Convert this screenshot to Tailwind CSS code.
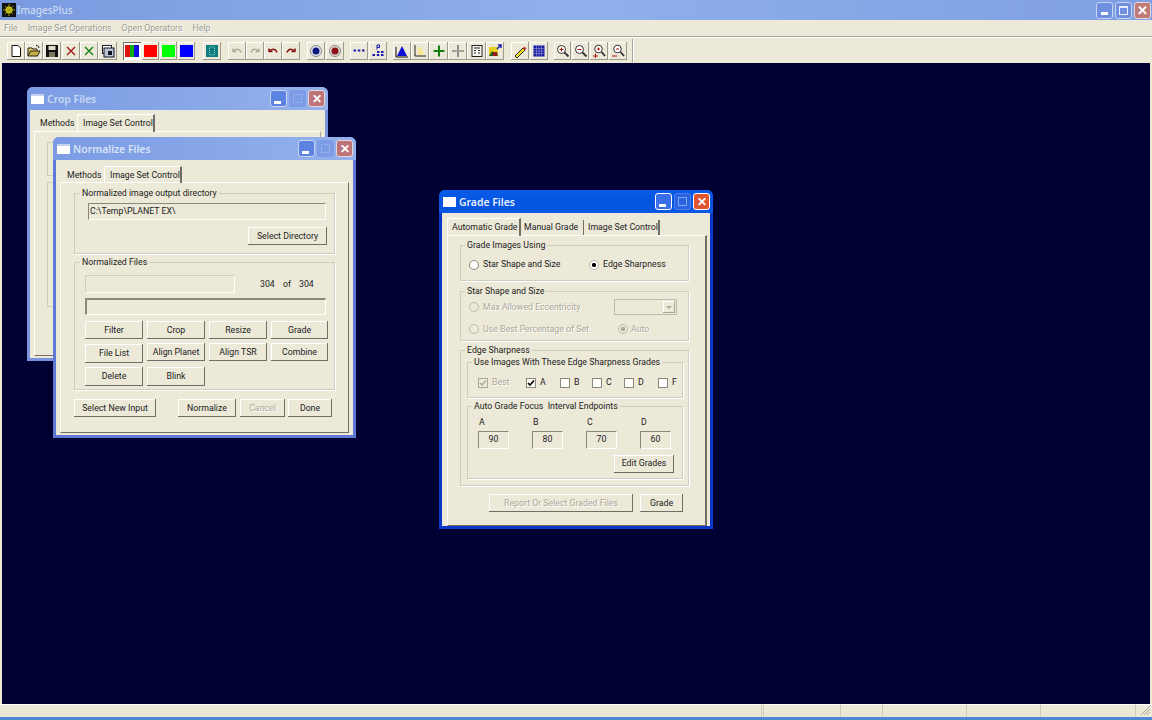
<!DOCTYPE html>
<html lang="en">
<head>
<meta charset="UTF-8">
<title>ImagesPlus</title>
<script src="https://cdn.jsdelivr.net/npm/@tailwindcss/browser@4"></script>
</head>
<body class="w-[1152px] h-[720px] overflow-hidden flex flex-col bg-[#ece9d8] text-[#222] font-['Roboto','Liberation_Sans',Arial,sans-serif] text-[8.75px] leading-none whitespace-nowrap">

<!-- main title bar -->
<header class="h-[20px] flex items-center bg-gradient-to-r from-[#7a9ae0] via-[#8fb0ea] to-[#7f9fe4]">
  <svg class="w-[14px] h-[14px] ml-[2px]" viewBox="0 0 14 14"><rect width="14" height="14" fill="#111"/><circle cx="7" cy="7" r="3.5" fill="#d8d010"/><path d="M7 1v12M1 7h12M3 3l8 8M11 3l-8 8" stroke="#a8a010" stroke-width="1"/></svg>
  <span class="ml-[1px] font-['Noto_Sans',sans-serif] text-[10.2px] text-[#d5e1f7]">ImagesPlus</span>
  <div class="ml-auto mr-[1px] flex gap-[2px]">
    <span class="w-[17px] h-[17px] rounded-[3px] border border-[#c8d4f0] bg-[#6f8fdf] flex items-end pl-[4px] pb-[3px]"><i class="block w-[7px] h-[3px] bg-white"></i></span>
    <span class="w-[17px] h-[17px] rounded-[3px] border border-[#c8d4f0] bg-[#6f8fdf] flex items-center justify-center"><i class="block w-[9px] h-[9px] border border-t-2 border-[#e4ecfb]"></i></span>
    <span class="w-[17px] h-[17px] rounded-[3px] border border-[#e6d8d8] bg-[#c07a78] text-white text-[13px] font-bold flex items-center justify-center">✕</span>
  </div>
</header>

<!-- menu -->
<nav class="h-[17px] flex items-center gap-[10px] pl-[4px] text-[#9c9b90] [text-shadow:1px_1px_0_#fff] border-b border-[#aca899]">
  <span>File</span><span>Image Set Operations</span><span>Open Operators</span><span>Help</span>
</nav>

<!-- toolbar -->
<div class="h-[26px] flex items-center pl-[7px] border-t border-white">
  <div class="flex">
    <button class="w-[18px] h-[18px] flex items-center justify-center shadow-[inset_-1px_-1px_0_#9d9b8e,inset_1px_1px_0_#fff]"><svg class="w-[14px] h-[14px]" viewBox="0 0 14 14"><path d="M3 1.500h6l2.500 2.500v8.500h-8.500z" fill="#fff" stroke="#111"/></svg></button>
    <button class="w-[18px] h-[18px] flex items-center justify-center shadow-[inset_-1px_-1px_0_#9d9b8e,inset_1px_1px_0_#fff]"><svg class="w-[14px] h-[14px]" viewBox="0 0 14 14"><path d="M1 12V4h4l1 1h4v2" fill="#e8d060" stroke="#222"/><path d="M1 12l2.500-5H13l-2.500 5z" fill="#c8b040" stroke="#222"/><path d="M9 1.500c2 0 3 1 3 2.500" fill="none" stroke="#222"/></svg></button>
    <button class="w-[18px] h-[18px] flex items-center justify-center shadow-[inset_-1px_-1px_0_#9d9b8e,inset_1px_1px_0_#fff]"><svg class="w-[14px] h-[14px]" viewBox="0 0 14 14"><rect x="1" y="1" width="12" height="12" fill="#111"/><rect x="3.500" y="2" width="7" height="4" fill="#dcdcc8"/><rect x="4" y="8" width="6" height="5" fill="#77775f"/></svg></button>
    <button class="ml-[1px] w-[18px] h-[18px] flex items-center justify-center shadow-[inset_-1px_-1px_0_#9d9b8e,inset_1px_1px_0_#fff]"><svg class="w-[14px] h-[14px]" viewBox="0 0 14 14"><path d="M3 3l8 8M11 3l-8 8" stroke="#a01818" stroke-width="1.400"/></svg></button>
    <button class="w-[18px] h-[18px] flex items-center justify-center shadow-[inset_-1px_-1px_0_#9d9b8e,inset_1px_1px_0_#fff]"><svg class="w-[14px] h-[14px]" viewBox="0 0 14 14"><path d="M3 3l8 8M11 3l-8 8" stroke="#128012" stroke-width="1.400"/></svg></button>
    <button class="w-[19px] h-[18px] flex items-center justify-center shadow-[inset_-1px_-1px_0_#9d9b8e,inset_1px_1px_0_#fff]"><svg class="w-[14px] h-[14px]" viewBox="0 0 14 14"><rect x="1.500" y="1.500" width="9" height="8" fill="#fff" stroke="#223"/><rect x="3" y="4" width="10" height="9" fill="#bcc4d8" stroke="#112"/><rect x="7" y="7" width="4" height="4" fill="#112"/></svg></button>
  </div>
  <div class="flex ml-[6px] gap-[1px]">
    <button class="w-[18px] h-[18px] flex items-center justify-center bg-white shadow-[inset_1px_1px_0_#716f64,inset_-1px_-1px_0_#fff]"><span class="flex w-[14px] h-[12px]"><i class="flex-1 bg-[#e01010]"></i><i class="flex-1 bg-[#10b010]"></i><i class="flex-1 bg-[#1010e0]"></i></span></button>
    <button class="w-[17px] h-[18px] flex items-center justify-center shadow-[inset_-1px_-1px_0_#9d9b8e,inset_1px_1px_0_#fff]"><i class="block w-[13px] h-[12px] bg-[#ff0000]"></i></button>
    <button class="w-[17px] h-[18px] flex items-center justify-center shadow-[inset_-1px_-1px_0_#9d9b8e,inset_1px_1px_0_#fff]"><i class="block w-[13px] h-[12px] bg-[#00ff00]"></i></button>
    <button class="w-[17px] h-[18px] flex items-center justify-center shadow-[inset_-1px_-1px_0_#9d9b8e,inset_1px_1px_0_#fff]"><i class="block w-[13px] h-[12px] bg-[#0000ff]"></i></button>
  </div>
  <button class="ml-[8px] w-[18px] h-[18px] flex items-center justify-center shadow-[inset_-1px_-1px_0_#9d9b8e,inset_1px_1px_0_#fff]"><svg class="w-[14px] h-[14px]" viewBox="0 0 14 14"><rect x="1" y="1" width="12" height="12" fill="#0c7c7c"/><rect x="4.500" y="3" width="5" height="8" fill="none" stroke="#8fd0d0" stroke-dasharray="1 1"/></svg></button>
  <div class="flex ml-[7px]">
    <button class="w-[18px] h-[18px] flex items-center justify-center shadow-[inset_-1px_-1px_0_#9d9b8e,inset_1px_1px_0_#fff]"><svg class="w-[14px] h-[14px]" viewBox="0 0 14 14"><path d="M3 8V4.500M3 7.500h3.500M3.500 7.500c1.500-3 6-3.500 7.500 1" fill="none" stroke="#aca899" stroke-width="1.300"/></svg></button>
    <button class="w-[18px] h-[18px] flex items-center justify-center shadow-[inset_-1px_-1px_0_#9d9b8e,inset_1px_1px_0_#fff]"><svg class="w-[14px] h-[14px]" viewBox="0 0 14 14"><path d="M11 8V4.500M11 7.500H7.500M10.500 7.500c-1.500-3-6-3.500-7.500 1" fill="none" stroke="#aca899" stroke-width="1.300"/></svg></button>
    <button class="w-[18px] h-[18px] flex items-center justify-center shadow-[inset_-1px_-1px_0_#9d9b8e,inset_1px_1px_0_#fff]"><svg class="w-[14px] h-[14px]" viewBox="0 0 14 14"><path d="M3 8V4.500M3 7.500h3.500M3.500 7.500c1.500-3 6-3.500 7.500 1" fill="none" stroke="#8c1010" stroke-width="1.500"/></svg></button>
    <button class="w-[18px] h-[18px] flex items-center justify-center shadow-[inset_-1px_-1px_0_#9d9b8e,inset_1px_1px_0_#fff]"><svg class="w-[14px] h-[14px]" viewBox="0 0 14 14"><path d="M11 8V4.500M11 7.500H7.500M10.500 7.500c-1.500-3-6-3.500-7.500 1" fill="none" stroke="#8c1010" stroke-width="1.500"/></svg></button>
  </div>
  <div class="flex ml-[7px] gap-[1px]">
    <button class="w-[18px] h-[18px] flex items-center justify-center shadow-[inset_-1px_-1px_0_#9d9b8e,inset_1px_1px_0_#fff]"><svg class="w-[14px] h-[14px]" viewBox="0 0 14 14"><circle cx="7" cy="7" r="5.500" fill="#dfe6f2" stroke="#8a8a8a"/><circle cx="7" cy="7" r="3.500" fill="#101880"/></svg></button>
    <button class="w-[18px] h-[18px] flex items-center justify-center shadow-[inset_-1px_-1px_0_#9d9b8e,inset_1px_1px_0_#fff]"><svg class="w-[14px] h-[14px]" viewBox="0 0 14 14"><circle cx="7" cy="7" r="5.500" fill="#dfd8d0" stroke="#8a8a8a"/><circle cx="7" cy="7" r="3.500" fill="#8c1018"/></svg></button>
  </div>
  <div class="flex ml-[6px] gap-[1px]">
    <button class="w-[18px] h-[18px] flex items-center justify-center shadow-[inset_-1px_-1px_0_#9d9b8e,inset_1px_1px_0_#fff]"><svg class="w-[14px] h-[14px]" viewBox="0 0 14 14"><path d="M1.500 6.500h2.500M5.800 6.500h2.500M10 6.500h2.500" stroke="#1818b0" stroke-width="2"/></svg></button>
    <button class="w-[18px] h-[18px] flex items-center justify-center shadow-[inset_-1px_-1px_0_#9d9b8e,inset_1px_1px_0_#fff]"><svg class="w-[14px] h-[14px]" viewBox="0 0 14 14"><path d="M6 1v4.500M6 1h2.500v2.500H6" fill="none" stroke="#1818b0"/><path d="M1.500 11h2.500M5.800 11h2.500M10 11h2.500M6 8h2.500M10 8h2.500" stroke="#1818b0" stroke-width="2"/></svg></button>
  </div>
  <div class="flex ml-[6px]">
    <button class="w-[18px] h-[18px] flex items-center justify-center shadow-[inset_-1px_-1px_0_#9d9b8e,inset_1px_1px_0_#fff]"><svg class="w-[14px] h-[14px]" viewBox="0 0 14 14"><path d="M1 13V3" stroke="#111"/><path d="M7 2l5 10H2z" fill="#0c10d0"/><path d="M1 13h12" stroke="#111"/></svg></button>
    <button class="w-[18px] h-[18px] flex items-center justify-center shadow-[inset_-1px_-1px_0_#9d9b8e,inset_1px_1px_0_#fff]"><svg class="w-[14px] h-[14px]" viewBox="0 0 14 14"><path d="M5 11V4l3-1 3 8z" fill="#f4e890"/><path d="M2 1v11h11" fill="none" stroke="#222"/></svg></button>
    <button class="w-[19px] h-[18px] flex items-center justify-center shadow-[inset_-1px_-1px_0_#9d9b8e,inset_1px_1px_0_#fff]"><svg class="w-[14px] h-[14px]" viewBox="0 0 14 14"><path d="M7 1.500v11M1.500 7h11" stroke="#108010" stroke-width="2"/></svg></button>
    <button class="w-[19px] h-[18px] flex items-center justify-center shadow-[inset_-1px_-1px_0_#9d9b8e,inset_1px_1px_0_#fff]"><svg class="w-[14px] h-[14px]" viewBox="0 0 14 14"><path d="M7 1v12M1 7h12" stroke="#555" stroke-width="1.200"/><path d="M5 7h4" stroke="#bbb"/></svg></button>
    <button class="w-[19px] h-[18px] flex items-center justify-center shadow-[inset_-1px_-1px_0_#9d9b8e,inset_1px_1px_0_#fff]"><svg class="w-[14px] h-[14px]" viewBox="0 0 14 14"><rect x="2" y="1.500" width="10" height="11" fill="#f6f6ee" stroke="#222"/><path d="M4 4h6M4 6.500h2M8 6.500h2M4 9h2M8 9h2" stroke="#222"/></svg></button>
    <button class="w-[18px] h-[18px] flex items-center justify-center shadow-[inset_-1px_-1px_0_#9d9b8e,inset_1px_1px_0_#fff]"><svg class="w-[14px] h-[14px]" viewBox="0 0 14 14"><rect x="1" y="3" width="9" height="9" fill="#e8d020"/><path d="M1 12l3-5 3 3 2-2 1 4z" fill="#206020"/><rect x="5" y="8" width="4" height="4" fill="#a01818"/><path d="M9 5l4-4M10 1h3v3" fill="none" stroke="#2020b0" stroke-width="1.500"/></svg></button>
  </div>
  <div class="flex ml-[7px] gap-[1px]">
    <button class="w-[18px] h-[18px] flex items-center justify-center shadow-[inset_-1px_-1px_0_#9d9b8e,inset_1px_1px_0_#fff]"><svg class="w-[14px] h-[14px]" viewBox="0 0 14 14"><path d="M2 12l8-8 2 2-8 8z" fill="#f0e020" stroke="#222"/><path d="M10 4l1.500-1.500 2 2L12 6z" fill="#d03030"/></svg></button>
    <button class="w-[18px] h-[18px] flex items-center justify-center shadow-[inset_-1px_-1px_0_#9d9b8e,inset_1px_1px_0_#fff]"><svg class="w-[14px] h-[14px]" viewBox="0 0 14 14"><rect x="1.500" y="1.500" width="11" height="11" fill="#1818a0"/><path d="M4.500 1.500v11M7 1.500v11M9.500 1.500v11M1.500 4.500h11M1.500 7h11M1.500 9.500h11" stroke="#9aa0d8" stroke-width=".6"/></svg></button>
  </div>
  <div class="flex ml-[6px] gap-[1px]">
    <button class="w-[17px] h-[18px] flex items-center justify-center shadow-[inset_-1px_-1px_0_#9d9b8e,inset_1px_1px_0_#fff]"><svg class="w-[14px] h-[14px]" viewBox="0 0 14 14"><circle cx="5.500" cy="5.500" r="4" fill="#fff" stroke="#333"/><path d="M8.500 8.500l4 4" stroke="#333" stroke-width="1.800"/><path d="M3.500 5.500h4M5.500 3.500v4" stroke="#b01010"/></svg></button>
    <button class="w-[17px] h-[18px] flex items-center justify-center shadow-[inset_-1px_-1px_0_#9d9b8e,inset_1px_1px_0_#fff]"><svg class="w-[14px] h-[14px]" viewBox="0 0 14 14"><circle cx="5.500" cy="5.500" r="4" fill="#fff" stroke="#333"/><path d="M8.500 8.500l4 4" stroke="#333" stroke-width="1.800"/><path d="M3.500 5.500h4" stroke="#b01010"/></svg></button>
    <button class="w-[18px] h-[18px] flex items-center justify-center shadow-[inset_-1px_-1px_0_#9d9b8e,inset_1px_1px_0_#fff]"><svg class="w-[14px] h-[14px]" viewBox="0 0 14 14"><circle cx="6.500" cy="5" r="3.800" fill="#fff" stroke="#333"/><path d="M9.500 8l3.500 4" stroke="#333" stroke-width="1.800"/><path d="M5 5h3M6.500 3.500v3M1 12h5M3.500 9.500v4.500" stroke="#b01010"/></svg></button>
    <button class="w-[18px] h-[18px] flex items-center justify-center shadow-[inset_-1px_-1px_0_#9d9b8e,inset_1px_1px_0_#fff]"><svg class="w-[14px] h-[14px]" viewBox="0 0 14 14"><circle cx="6.500" cy="5" r="3.800" fill="#fff" stroke="#333"/><path d="M9.500 8l3.500 4" stroke="#333" stroke-width="1.800"/><path d="M5 5h3M1 12h5" stroke="#b01010"/></svg></button>
  </div>
  <i class="block ml-[5px] w-[2px] h-[24px] border-l border-[#aca899] bg-white"></i>
</div>

<!-- desktop with child windows -->
<main class="relative flex-1 mx-[2px] bg-[#000033]">

  <!-- Crop Files (behind) -->
  <section class="absolute left-[25px] top-[24px] w-[301px] h-[274px] flex flex-col rounded-t-[6px] border-x-[3px] border-b-[3px] border-[#7a92dc] bg-[#ece9d8]">
    <div class="h-[23px] -mx-[3px] shrink-0 rounded-t-[6px] flex items-center pl-[3px] bg-gradient-to-r from-[#7b9ce4] to-[#94b1ec]">
      <i class="block w-[13px] h-[10px] bg-white border-t-2 border-[#c4d2f0] ml-[1px]"></i>
      <span class="ml-[3px] pt-[2px] font-['Noto_Sans',sans-serif] text-[10.4px] font-semibold text-[#c9d8f5]">Crop Files</span>
      <div class="ml-auto mr-[3px] flex gap-[2px]">
        <span class="w-[17px] h-[17px] rounded-[3px] border border-[#c8d4f0] bg-[#5c82e2] flex items-end pl-[3px] pb-[2px]"><i class="block w-[7px] h-[3px] bg-white"></i></span>
        <span class="w-[17px] h-[17px] rounded-[3px] bg-[#7d9ce6] flex items-center justify-center"><i class="block w-[9px] h-[9px] border border-[#92aeea]"></i></span>
        <span class="w-[17px] h-[17px] rounded-[3px] border border-[#e6d8d8] bg-[#bd7478] text-white text-[12px] font-bold flex items-center justify-center">✕</span>
      </div>
    </div>
    <div class="flex pl-[4px] h-[21px] shrink-0 items-end">
      <span class="h-[15px] w-[43px] pl-[6px] flex items-center">Methods</span>
      <span class="h-[18px] w-[78px] pl-[5px] flex items-center border-t border-l border-white border-r-2 border-r-[#716f64] relative top-[1px]">Image Set Control</span>
    </div>
    <div class="ml-[4px] w-[287px] h-[225px] border-t border-l border-white border-r border-r-[#aca899] border-b border-b-[#716f64] pl-[12px] pt-[10px]">
      <div class="w-[300px] h-[34px] border border-[#cfcdbd]"></div>
      <div class="mt-[6px] w-[300px] h-[125px] border border-[#cfcdbd]"></div>
    </div>
  </section>

  <!-- Normalize Files -->
  <section class="absolute left-[51px] top-[74px] w-[303px] h-[301px] flex flex-col rounded-t-[6px] border-x-[3px] border-b-[3px] border-[#5f78d6] bg-[#ece9d8]">
    <div class="h-[23px] -mx-[3px] shrink-0 rounded-t-[6px] flex items-center pl-[3px] bg-gradient-to-r from-[#7b9ce4] to-[#94b1ec]">
      <i class="block w-[13px] h-[10px] bg-white border-t-2 border-[#c4d2f0] ml-[1px]"></i>
      <span class="ml-[3px] pt-[2px] font-['Noto_Sans',sans-serif] text-[10.4px] font-semibold text-[#d9e4f8]">Normalize Files</span>
      <div class="ml-auto mr-[3px] flex gap-[2px]">
        <span class="w-[17px] h-[17px] rounded-[3px] border border-[#c8d4f0] bg-[#5c82e2] flex items-end pl-[3px] pb-[2px]"><i class="block w-[7px] h-[3px] bg-white"></i></span>
        <span class="w-[17px] h-[17px] rounded-[3px] bg-[#7d9ce6] flex items-center justify-center"><i class="block w-[9px] h-[9px] border border-[#92aeea]"></i></span>
        <span class="w-[17px] h-[17px] rounded-[3px] border border-[#e6d8d8] bg-[#bd7478] text-white text-[12px] font-bold flex items-center justify-center">✕</span>
      </div>
    </div>
    <div class="flex pl-[7px] pt-[5px] h-[22px] shrink-0 items-end">
      <span class="h-[14px] w-[41px] pl-[4px] flex items-center">Methods</span>
      <span class="h-[17px] w-[78px] pl-[5px] flex items-center border-t border-l border-white border-r-2 border-r-[#716f64] relative top-[1px]">Image Set Control</span>
    </div>
    <div class="ml-[4px] w-[289px] h-[251px] border-t border-l border-white border-r border-r-[#716f64] border-b border-b-[#716f64] pl-[13px] pt-[10px]">
      <!-- output directory group -->
      <div class="relative w-[261px] h-[61px] border border-[#cfcdbd] shadow-[1px_1px_0_#fff] pl-[13px] pt-[9px]">
        <span class="absolute -top-[5px] left-[5px] bg-[#ece9d8] px-[2px]">Normalized image output directory</span>
        <div class="w-[238px] h-[17px] flex items-center pl-[1px] border-t border-l border-[#8a8878] border-r border-b border-r-[#fff] border-b-[#fff]">C:\Temp\PLANET EX\</div>
        <div class="mt-[7px] ml-[160px] w-[79px] h-[18px] flex items-center justify-center shadow-[inset_-1px_-1px_0_#716f64,inset_1px_1px_0_#fff]">Select Directory</div>
      </div>
      <!-- normalized files group -->
      <div class="relative mt-[8px] w-[261px] h-[128px] border border-[#cfcdbd] shadow-[1px_1px_0_#fff] pl-[10px] pt-[12px]">
        <span class="absolute -top-[5px] left-[5px] bg-[#ece9d8] px-[2px]">Normalized Files</span>
        <div class="flex items-center h-[18px]">
          <div class="w-[150px] h-[18px] border-t border-l border-[#cfcdbd] border-r border-b border-r-[#fff] border-b-[#fff]"></div>
          <span class="ml-[25px] w-[23px]">304</span><span class="w-[16px]">of</span><span>304</span>
        </div>
        <div class="mt-[5px] w-[241px] h-[17px] border-t-2 border-l-2 border-[#8a8878] border-r border-b border-r-[#fff] border-b-[#fff]"></div>
        <div class="mt-[6px] flex gap-[4px] h-[18px]">
          <div class="w-[58px] flex items-center justify-center shadow-[inset_-1px_-1px_0_#716f64,inset_1px_1px_0_#fff]">Filter</div>
          <div class="w-[58px] flex items-center justify-center shadow-[inset_-1px_-1px_0_#716f64,inset_1px_1px_0_#fff]">Crop</div>
          <div class="w-[58px] flex items-center justify-center shadow-[inset_-1px_-1px_0_#716f64,inset_1px_1px_0_#fff]">Resize</div>
          <div class="w-[57px] flex items-center justify-center shadow-[inset_-1px_-1px_0_#716f64,inset_1px_1px_0_#fff]">Grade</div>
        </div>
        <div class="mt-[4px] flex gap-[4px] h-[19px] items-start">
          <div class="w-[58px] h-[19px] mt-px flex items-center justify-center shadow-[inset_-1px_-1px_0_#716f64,inset_1px_1px_0_#fff]">File List</div>
          <div class="w-[58px] h-[18px] flex items-center justify-center shadow-[inset_-1px_-1px_0_#716f64,inset_1px_1px_0_#fff]">Align Planet</div>
          <div class="w-[58px] h-[18px] flex items-center justify-center shadow-[inset_-1px_-1px_0_#716f64,inset_1px_1px_0_#fff]">Align TSR</div>
          <div class="w-[57px] h-[18px] flex items-center justify-center shadow-[inset_-1px_-1px_0_#716f64,inset_1px_1px_0_#fff]">Combine</div>
        </div>
        <div class="mt-[5px] flex gap-[4px] h-[19px]">
          <div class="w-[58px] flex items-center justify-center shadow-[inset_-1px_-1px_0_#716f64,inset_1px_1px_0_#fff]">Delete</div>
          <div class="w-[58px] flex items-center justify-center shadow-[inset_-1px_-1px_0_#716f64,inset_1px_1px_0_#fff]">Blink</div>
        </div>
      </div>
      <!-- action buttons -->
      <div class="mt-[9px] flex h-[18px]">
        <div class="w-[82px] flex items-center justify-center shadow-[inset_-1px_-1px_0_#716f64,inset_1px_1px_0_#fff]">Select New Input</div>
        <div class="ml-[22px] w-[58px] flex items-center justify-center shadow-[inset_-1px_-1px_0_#716f64,inset_1px_1px_0_#fff]">Normalize</div>
        <div class="ml-[4px] w-[45px] flex items-center justify-center text-[#aca899] [text-shadow:1px_1px_0_#fff] shadow-[inset_-1px_-1px_0_#716f64,inset_1px_1px_0_#fff]">Cancel</div>
        <div class="ml-[3px] w-[44px] flex items-center justify-center shadow-[inset_-1px_-1px_0_#716f64,inset_1px_1px_0_#fff]">Done</div>
      </div>
    </div>
  </section>

  <!-- Grade Files (active) -->
  <section class="absolute left-[437px] top-[127px] w-[274px] h-[339px] flex flex-col rounded-t-[6px] border-x-[3px] border-b-[3px] border-[#0838c8] bg-[#ece9d8]">
    <div class="h-[23px] -mx-[3px] shrink-0 rounded-t-[6px] flex items-center pl-[3px] bg-gradient-to-b from-[#0a5ce8] via-[#0454e0] to-[#0a58e4]">
      <i class="block w-[13px] h-[10px] bg-white ml-[1px]"></i>
      <span class="ml-[3px] pt-[2px] font-['Noto_Sans',sans-serif] text-[10.4px] font-semibold text-[#e8f0ff]">Grade Files</span>
      <div class="ml-auto mr-[3px] flex gap-[2px]">
        <span class="w-[17px] h-[17px] rounded-[3px] border border-white bg-[#3a6ee8] flex items-end pl-[3px] pb-[2px]"><i class="block w-[7px] h-[3px] bg-white"></i></span>
        <span class="w-[17px] h-[17px] rounded-[3px] border border-[#4a80ea] bg-[#2a62e4] flex items-center justify-center"><i class="block w-[9px] h-[9px] border border-[#7fa6f0]"></i></span>
        <span class="w-[17px] h-[17px] rounded-[3px] border border-white bg-[#e0552f] text-white text-[12px] font-bold flex items-center justify-center">✕</span>
      </div>
    </div>
    <div class="flex pl-[5px] pt-[5px] h-[22px] shrink-0 items-end">
      <span class="h-[18px] w-[74px] pl-[4px] flex items-center border-t border-l border-white border-r-2 border-r-[#716f64] relative top-[1px]">Automatic Grade</span>
      <span class="h-[15px] w-[63px] pl-[3px] flex items-center border-r border-[#716f64]">Manual Grade</span>
      <span class="h-[15px] w-[76px] pl-[4px] flex items-center border-r-2 border-[#716f64]">Image Set Control</span>
    </div>
    <div class="ml-[5px] w-[260px] h-[291px] border-t border-l border-white border-r-2 border-r-[#716f64] border-b border-b-[#716f64] pl-[12px] pt-[9px]">
      <!-- grade images using -->
      <div class="relative w-[229px] h-[36px] border border-[#cfcdbd] shadow-[1px_1px_0_#fff]">
        <span class="absolute -top-[5px] left-[4px] bg-[#ece9d8] px-[2px]">Grade Images Using</span>
        <div class="flex items-center h-full pt-[3px] pl-[8px]">
          <i class="block w-[10px] h-[10px] rounded-full bg-white border border-[#8a8878]"></i>
          <span class="ml-[4px] w-[106px]">Star Shape and Size</span>
          <i class="block w-[10px] h-[10px] rounded-full border border-[#b5b3a4] bg-[radial-gradient(#000_32%,#fff_42%)]"></i>
          <span class="ml-[4px]">Edge Sharpness</span>
        </div>
      </div>
      <!-- star shape and size (disabled) -->
      <div class="relative mt-[10px] w-[229px] h-[50px] border border-[#cfcdbd] shadow-[1px_1px_0_#fff] text-[#aca899] [text-shadow:1px_1px_0_#fff] pl-[8px] pt-[7px]">
        <span class="absolute -top-[5px] left-[4px] bg-[#ece9d8] px-[2px] text-[#222] [text-shadow:none]">Star Shape and Size</span>
        <div class="flex items-center h-[16px]">
          <i class="block w-[10px] h-[10px] rounded-full bg-[#ece9d8] border border-[#bdbbab]"></i>
          <span class="ml-[4px] w-[131px]">Max Allowed Eccentricity</span>
          <div class="w-[63px] h-[16px] border border-[#bdbbab] flex justify-end items-center pr-[1px]">
            <span class="w-[12px] h-[12px] flex items-center justify-center shadow-[inset_-1px_-1px_0_#aca899,inset_1px_1px_0_#fff]"><i class="block border-x-[3px] border-t-[3px] border-x-transparent border-t-[#aca899]"></i></span>
          </div>
        </div>
        <div class="flex items-center h-[16px] mt-[6px]">
          <i class="block w-[10px] h-[10px] rounded-full bg-[#ece9d8] border border-[#bdbbab]"></i>
          <span class="ml-[4px] w-[135px]">Use Best Percentage of Set</span>
          <i class="block w-[10px] h-[10px] rounded-full border border-[#bdbbab] bg-[radial-gradient(#aca899_35%,#ece9d8_45%)]"></i>
          <span class="ml-[3px]">Auto</span>
        </div>
      </div>
      <!-- edge sharpness -->
      <div class="relative mt-[9px] w-[229px] h-[136px] border border-[#cfcdbd] shadow-[1px_1px_0_#fff] pl-[6px] pt-[11px]">
        <span class="absolute -top-[5px] left-[4px] bg-[#ece9d8] px-[2px]">Edge Sharpness</span>
        <div class="relative w-[216px] h-[36px] border border-[#cfcdbd] shadow-[1px_1px_0_#fff] flex items-center pt-[5px] pl-[10px]">
          <span class="absolute -top-[5px] left-[4px] bg-[#ece9d8] px-[2px]">Use Images With These Edge Sharpness Grades</span>
          <i class="block w-[10px] h-[10px] border border-[#aca899]"><svg class="w-[8px] h-[8px]" viewBox="0 0 8 8"><path d="M1 4l2 2 4-4.500" fill="none" stroke="#aca899" stroke-width="1.500"/></svg></i>
          <span class="ml-[4px] w-[34px] text-[#aca899] [text-shadow:1px_1px_0_#fff]">Best</span>
          <i class="block w-[10px] h-[10px] bg-white border border-[#8a8878]"><svg class="w-[8px] h-[8px]" viewBox="0 0 8 8"><path d="M1 4l2 2 4-4.500" fill="none" stroke="#000" stroke-width="1.600"/></svg></i>
          <span class="ml-[4px] w-[20px]">A</span>
          <i class="block w-[10px] h-[10px] bg-white border border-[#8a8878]"></i>
          <span class="ml-[4px] w-[18px]">B</span>
          <i class="block w-[10px] h-[10px] bg-white border border-[#8a8878]"></i>
          <span class="ml-[4px] w-[18px]">C</span>
          <i class="block w-[10px] h-[10px] bg-white border border-[#8a8878]"></i>
          <span class="ml-[4px] w-[20px]">D</span>
          <i class="block w-[10px] h-[10px] bg-white border border-[#8a8878]"></i>
          <span class="ml-[4px]">F</span>
        </div>
        <div class="relative mt-[8px] w-[216px] h-[73px] border border-[#cfcdbd] shadow-[1px_1px_0_#fff] pl-[10px] pt-[11px]">
          <span class="absolute -top-[5px] left-[4px] bg-[#ece9d8] px-[2px]">Auto Grade Focus&nbsp; Interval Endpoints</span>
          <div class="grid grid-cols-[54px_54px_54px_31px] pl-px">
            <span>A</span><span>B</span><span>C</span><span>D</span>
          </div>
          <div class="mt-[4px] grid grid-cols-[54px_54px_54px_31px] h-[18px]">
            <div class="w-[31px] flex items-center justify-center border-t border-l border-[#8a8878] border-r border-b border-r-white border-b-white">90</div>
            <div class="w-[31px] flex items-center justify-center border-t border-l border-[#8a8878] border-r border-b border-r-white border-b-white">80</div>
            <div class="w-[31px] flex items-center justify-center border-t border-l border-[#8a8878] border-r border-b border-r-white border-b-white">70</div>
            <div class="w-[31px] flex items-center justify-center border-t border-l border-[#8a8878] border-r border-b border-r-white border-b-white">60</div>
          </div>
          <div class="mt-[6px] ml-[136px] w-[60px] h-[18px] flex items-center justify-center shadow-[inset_-1px_-1px_0_#716f64,inset_1px_1px_0_#fff]">Edit Grades</div>
        </div>
      </div>
      <!-- bottom buttons -->
      <div class="mt-[8px] ml-[29px] flex h-[18px]">
        <div class="w-[144px] flex items-center justify-center text-[#aca899] [text-shadow:1px_1px_0_#fff] shadow-[inset_-1px_-1px_0_#716f64,inset_1px_1px_0_#fff]">Report Or Select Graded Files</div>
        <div class="ml-[7px] w-[43px] flex items-center justify-center shadow-[inset_-1px_-1px_0_#716f64,inset_1px_1px_0_#fff]">Grade</div>
      </div>
    </div>
  </section>
</main>

<!-- status bar -->
<footer class="h-[13px] flex pl-[2px] shadow-[inset_0_1px_0_#fff]">
  <div class="w-[760px] border-r border-[#cfcdbd]"></div>
  <div class="w-[78px] ml-px border-x border-[#cfcdbd]"></div>
  <div class="w-[42px] border-r border-[#cfcdbd]"></div>
  <div class="w-[84px] border-r border-[#cfcdbd]"></div>
  <div class="w-[74px] border-r border-[#cfcdbd]"></div>
  <div class="w-[95px] border-r border-[#cfcdbd]"></div>
  <svg class="ml-auto mr-[1px] w-[12px] h-[12px]" viewBox="0 0 12 12"><path d="M11 2l-9 9M11 5l-6 6M11 8l-3 3" stroke="#aca899"/></svg>
</footer>
<div class="h-[3px] bg-[#4f88d2]"></div>
</body>
</html>
